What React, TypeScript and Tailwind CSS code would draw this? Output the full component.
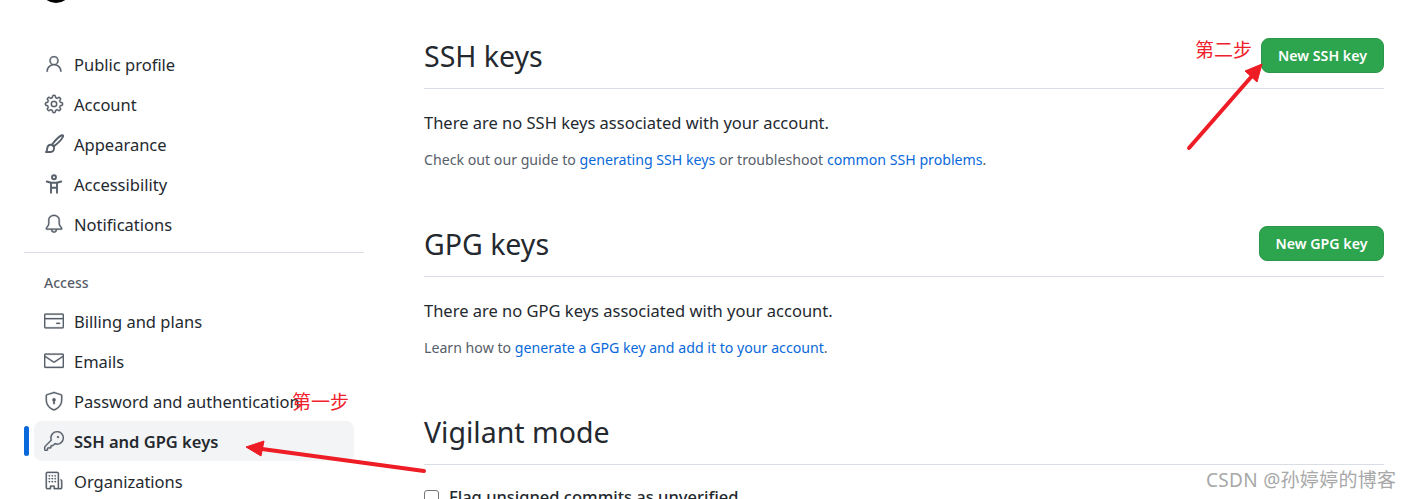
import type { ReactNode } from 'react';
import {
  GoBell,
  GoCreditCard,
  GoGear,
  GoKey,
  GoMail,
  GoOrganization,
  GoPerson,
  GoShieldLock,
} from 'react-icons/go';

type NavItemProps = {
  icon: ReactNode;
  label: string;
  active?: boolean;
};

const octiconProps = { size: 20, stroke: 'currentColor', strokeWidth: 0.35 };

function BrushIcon() {
  return (
    <svg width="20" height="20" viewBox="0 0 16 16" fill="none" stroke="currentColor" strokeWidth="1.5" strokeLinejoin="round" strokeLinecap="round">
      <path d="M6.6 8.2C8.6 5.6 12.4 1.6 14.3 1c1-.2 1.2.4.8 1.3-1 2-5 5.9-7.3 7.6Z" />
      <path d="M1.6 14.4H5.2c2 0 3.2-1.6 2.8-3.6-.3-1.4-1.6-2.4-3-2.2-2 .3-2.4 2-2.5 3.4 0 1-.4 1.8-.9 2.4Z" />
    </svg>
  );
}

function AccessibilityIcon() {
  return (
    <svg width="20" height="20" viewBox="0 0 16 16" fill="none" stroke="currentColor" strokeWidth="1.5" strokeLinecap="round" strokeLinejoin="round">
      <circle cx="8" cy="2.6" r="1.6" />
      <path d="M2.2 6 5.6 7h4.8l3.4-1" />
      <path d="M5.6 7v8M10.4 7v8M5.6 11h4.8" />
    </svg>
  );
}

function NavItem({ icon, label, active }: NavItemProps) {
  return (
    <div className="relative ml-[10px] mr-[10px]">
      {active ? <span className="absolute left-[-10px] top-[5px] h-[30px] w-[5px] rounded-full bg-[#0969da]" /> : null}
      <div className={`flex h-10 items-center gap-[10px] rounded-lg px-[10px] ${active ? 'bg-[#f3f4f6] font-semibold' : ''}`}>
        <span className="grid size-5 shrink-0 place-items-center text-[#57606a]">{icon}</span>
        <span className="whitespace-nowrap pt-[2px]">{label}</span>
      </div>
    </div>
  );
}

function Link({ children }: { children: ReactNode }) {
  return <span className="text-[#0969da]">{children}</span>;
}

function SectionHeader({ title, action }: { title: string; action?: ReactNode }) {
  return (
    <div className="flex h-[51px] items-start justify-between border-b border-[#d8dee4]">
      <h2 className="text-[28.5px] leading-[36px] font-normal">{title}</h2>
      {action}
    </div>
  );
}

function GreenButton({ label, width }: { label: string; width: string }) {
  return (
    <button className={`h-[35px] rounded-lg border border-[#2c974b] bg-[#2da44e] text-[14.2px] font-semibold text-white ${width}`}>
      {label}
    </button>
  );
}

export default function App() {
  return (
    <div className="relative h-[499px] w-[1412px] overflow-hidden bg-white font-['Noto_Sans','Noto_Sans_CJK_SC',sans-serif] text-[16.5px] text-[#24292f]">
      <div className="absolute left-[40px] top-[-29px] size-8 rounded-full bg-black" />

      <div className="flex items-start gap-[60px] pl-[24px]">
        <aside className="w-[340px] shrink-0 pt-[44px]">
          <NavItem icon={<GoPerson {...octiconProps} />} label="Public profile" />
          <NavItem icon={<GoGear {...octiconProps} />} label="Account" />
          <NavItem icon={<BrushIcon />} label="Appearance" />
          <NavItem icon={<AccessibilityIcon />} label="Accessibility" />
          <NavItem icon={<GoBell {...octiconProps} />} label="Notifications" />
          <div className="mt-[8px] border-t border-[#d8dee4]" />
          <p className="mt-[20px] mb-[8px] pl-5 text-[14px] leading-5 font-medium text-[#57606a]">Access</p>
          <NavItem icon={<GoCreditCard {...octiconProps} />} label="Billing and plans" />
          <NavItem icon={<GoMail {...octiconProps} />} label="Emails" />
          <NavItem icon={<GoShieldLock {...octiconProps} />} label="Password and authentication" />
          <NavItem icon={<GoKey {...octiconProps} />} label="SSH and GPG keys" active />
          <NavItem icon={<GoOrganization {...octiconProps} />} label="Organizations" />
        </aside>

        <main className="w-[960px] shrink-0 pt-[38px]">
          <SectionHeader title="SSH keys" action={<GreenButton label="New SSH key" width="w-[123px]" />} />
          <p className="mt-[21px] leading-[26px]">There are no SSH keys associated with your account.</p>
          <p className="mt-[13px] text-[14.17px] leading-[22px] text-[#57606a]">
            Check out our guide to <Link>generating SSH keys</Link> or troubleshoot <Link>common SSH problems</Link>.
          </p>

          <div className="mt-[55px]">
            <SectionHeader title="GPG keys" action={<GreenButton label="New GPG key" width="w-[125px]" />} />
          </div>
          <p className="mt-[21px] leading-[26px]">There are no GPG keys associated with your account.</p>
          <p className="mt-[13px] text-[14.17px] leading-[22px] text-[#57606a]">
            Learn how to <Link>generate a GPG key and add it to your account</Link>.
          </p>

          <div className="mt-[55px]">
            <SectionHeader title="Vigilant mode" />
          </div>
          <label className="mt-[19px] flex items-start gap-[10px] font-medium leading-[26px]">
            <span className="mt-[6px] size-[15px] rounded-[3px] border border-[#767676] bg-white" />
            Flag unsigned commits as unverified
          </label>
        </main>
      </div>

      {/* red annotations pasted on top of the screenshot */}
      <span className="absolute left-[292px] top-[390px] text-[19px] leading-6 text-[#f0202c]">第一步</span>
      <span className="absolute left-[1195px] top-[38px] text-[19px] leading-6 text-[#f0202c]">第二步</span>
      <svg className="absolute inset-0" width="1412" height="499" viewBox="0 0 1412 499" fill="none">
        <path d="M424 471 L262 449" stroke="#ee1c25" strokeWidth="4" strokeLinecap="round" />
        <path d="M246 447 L264 441 L261 456 Z" fill="#ee1c25" stroke="#ee1c25" strokeWidth="1" />
        <path d="M1189 148 L1252 76" stroke="#ee1c25" strokeWidth="4" strokeLinecap="round" />
        <path d="M1262 64 L1257 82 L1245 71 Z" fill="#ee1c25" stroke="#ee1c25" strokeWidth="1" />
      </svg>

      <span className="absolute left-[1206px] top-[468px] text-[19px] leading-6 tracking-[0.3px] text-[#a8a8a8]">CSDN @孙婷婷的博客</span>
    </div>
  );
}
